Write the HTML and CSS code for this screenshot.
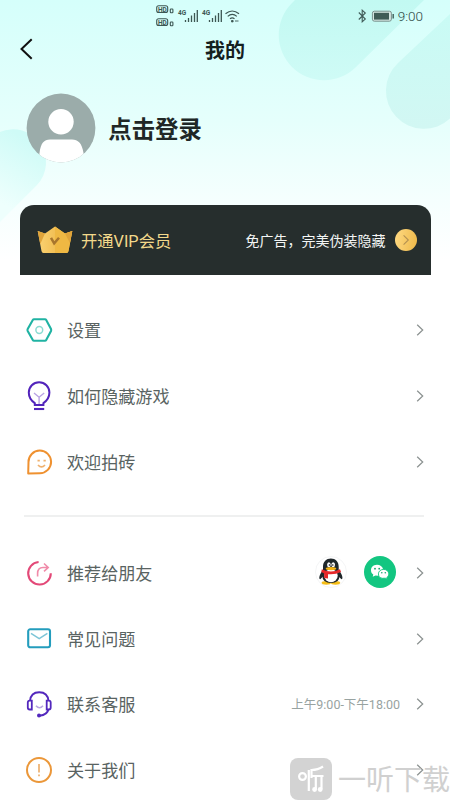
FILE: index.html
```html
<!DOCTYPE html>
<html lang="zh-CN">
<head>
<meta charset="utf-8">
<title>我的</title>
<link rel="stylesheet" href="styles.css">
</head>
<body>
<svg width="0" height="0" class="defs" aria-hidden="true">
  <symbol id="chev" viewBox="0 0 8 14"><path d="M1.2 1.7 6.7 7 1.2 12.3" fill="none" stroke="currentColor" stroke-width="1.25"/></symbol>
</svg>
<div class="screen">
  <svg class="decor" width="450" height="260" viewBox="0 0 450 260" aria-hidden="true">
    <defs>
      <linearGradient id="g1" x1="0" y1="0" x2="0" y2="1"><stop offset="0" stop-color="#c2f9f2"/><stop offset="1" stop-color="#cffbf6"/></linearGradient>
      <linearGradient id="g2" x1="0" y1="0" x2="0" y2="1"><stop offset="0" stop-color="#c9fbf5"/><stop offset="1" stop-color="#d2f7f3"/></linearGradient>
      <linearGradient id="g3" gradientUnits="userSpaceOnUse" x1="38" y1="145" x2="4" y2="205"><stop offset="0" stop-color="#cffbf7"/><stop offset="1" stop-color="#eefffd"/></linearGradient>
    </defs>
    <path d="M292 3 295 0H424L356 67A45 45 0 1 1 292 3Z" fill="url(#g1)"/>
    <path d="M398 63 450 14V118.6A38 38 0 0 1 398 63Z" fill="url(#g2)"/>
    <path d="M0 132A33 33 0 0 1 37 185L0 222Z" fill="url(#g3)"/>
  </svg>

  <div class="status">
    <svg class="signals" width="84" height="24" viewBox="0 0 84 24">
      <g fill="none" stroke="#3d5753" stroke-width="1.1"><rect x=".7" y="2.7" width="11" height="6.8" rx="2"/><rect x=".7" y="15.7" width="11" height="6.8" rx="2"/><rect x="14.3" y="6" width="2.6" height="3.8" rx=".7"/><rect x="14.3" y="19" width="2.6" height="3.8" rx=".7"/></g>
      <g fill="#3d5753" class="tiny"><text x="2" y="8.5">HD</text><text x="2" y="21.5">HD</text><text x="22" y="12">4G</text><text x="46" y="12">4G</text></g>
      <path d="M29.5 17v2M32.5 15V19M35.5 12.5V19M38.5 10V19M41.3 7V19M53.5 17v2M56.5 15V19M59.5 12.5V19M62.5 10V19M65.3 7V19" stroke="#3d5753" stroke-width="1.3"/>
      <path d="M69.5 10.8Q76.2 5.2 83 10.8M71.7 13.4Q76.2 9.4 80.8 13.4M74 15.8Q76.2 14 78.5 15.8" fill="none" stroke="#3d5753" stroke-width="1.2"/>
      <path d="M75.5 17.5h1.6v1.4h-1.6zM79 18h3.5" stroke="#3d5753" stroke-width=".9" fill="#3d5753"/>
    </svg>
    <div class="status-right">
      <svg width="37" height="14" viewBox="0 0 37 14"><path d="M1.8 3.5 8.3 10 5.2 12.8V1.2L8.3 4 1.8 10.5" fill="none" stroke="#405b58" stroke-width="1.1"/><rect x="15.4" y="2.2" width="19" height="10" rx="2" fill="#d5e6e2" stroke="#78918d" stroke-width="1"/><rect x="17" y="3.8" width="15" height="6.8" fill="#3f5c57"/><path d="M36.2 5v4.5" stroke="#3f5c57" stroke-width="1.4"/></svg>
      <span class="time">9:00</span>
    </div>
  </div>

  <header class="titlebar">
    <svg class="back" width="14" height="22" viewBox="0 0 14 22"><path d="M12.7 1.2 2.5 11 12.7 20.8" fill="none" stroke="#111" stroke-width="2"/></svg>
    <h1>我的</h1>
  </header>

  <div class="profile">
    <svg width="70" height="70" viewBox="0 0 70 70"><clipPath id="c"><circle cx="35" cy="35" r="34.4"/></clipPath><g clip-path="url(#c)"><path d="M0 0h70v70H0z" fill="#9bacaa"/><circle cx="35" cy="28.7" r="12.7" fill="#fff"/><path d="M12 70 13.5 60C14.8 50 18 46.5 24 46.5H46C52 46.5 56 50 57.5 60L59 70Z" fill="#fff"/></g></svg>
    <strong>点击登录</strong>
  </div>

  <div class="vip">
    <svg width="36" height="28" viewBox="0 0 36 28">
      <defs><linearGradient id="gold"><stop offset="0" stop-color="#fbd373"/><stop offset="1" stop-color="#e9ad39"/></linearGradient></defs>
      <path d="M.7 5 8 7.5 18 .5 28 7.5 35.3 5 31.5 25Q31.2 27 29.5 27H6.5Q4.8 27 4.5 25Z" fill="url(#gold)"/>
      <path d="M18 .5 28 7.5 35.3 5 31.5 25Q31.2 27 29.5 27H18Z" fill="#efb843"/><path d="M.7 5 8 7.5 3.3 18ZM28 7.5 35.3 5 32.9 17Z" fill="#e0a43a"/>
      <path d="M14 11.8 17.2 17.3 22 11.8" fill="none" stroke="#a8752c" stroke-width="2.5"/>
    </svg>
    <span class="vip-name">开通<span class="latin">VIP</span>会员</span>
    <span class="vip-note">免广告，完美伪装隐藏</span>
    <span class="coin"><svg width="8" height="12"><use href="#chev"/></svg></span>
  </div>

  <nav class="menu">
    <div class="row">
      <svg class="icon" viewBox="0 0 28 28" fill="none"><path d="M9 3.3H20Q20.8 3.3 21.2 4L26 13Q26.4 14 26 15L21.2 24Q20.8 24.8 20 24.8H9Q8.2 24.8 7.8 24L2.7 15Q2.2 14 2.7 13L7.8 4Q8.2 3.3 9 3.3Z" stroke="#20b3a3" stroke-width="2.1"/><circle cx="14.3" cy="14" r="3.4" stroke="#8bdcd2" stroke-width="1.5"/></svg>
      <span class="label">设置</span><svg class="chev"><use href="#chev"/></svg>
    </div>
    <div class="row">
      <svg class="icon bulb" viewBox="0 0 28 32" fill="none"><path d="M9.8 25V23.2C6.5 21 3.8 17.5 3.8 12.6A10.3 10.3 0 0 1 24.4 12.6C24.4 17.5 21.7 21 18.4 23.2V25Z" stroke="#5224bb" stroke-width="2"/><path d="M9 29H19.2" stroke="#5224bb" stroke-width="2.1"/><path d="M9 13 14.1 17.2 19.2 13M14.1 17.2V24" stroke="#b9a3e3" stroke-width="1.4"/></svg>
      <span class="label">如何隐藏游戏</span><svg class="chev"><use href="#chev"/></svg>
    </div>
    <div class="row">
      <svg class="icon" viewBox="0 0 28 28" fill="none"><path d="M3.2 25.5 3.5 14A11.3 11.3 0 1 1 14.8 25.2Z" stroke="#ef9130" stroke-width="2" stroke-linejoin="round"/><path d="M12.5 12.6h2.3M18.5 12.6h2.3M13 17Q16.5 20.8 20 17" stroke="#efb16f" stroke-width="1.7"/></svg>
      <span class="label">欢迎拍砖</span><svg class="chev"><use href="#chev"/></svg>
    </div>
    <hr>
    <div class="row">
      <svg class="icon" viewBox="0 0 28 28" fill="none"><path d="M13.6 3A11.3 11.3 0 1 0 25.8 14.2" stroke="#e34978" stroke-width="2.1"/><path d="M12.6 17.5V14.5Q12.6 8.5 18 8.5H22M19 4.5 23.2 8.5 19 12.4" stroke="#f08ba9" stroke-width="1.6"/></svg>
      <span class="label">推荐给朋友</span>
      <span class="share">
        <svg width="32" height="32" viewBox="0 0 32 32"><circle cx="16" cy="16" r="15.5" fill="#fff" stroke="#f4f5f6"/>
          <ellipse cx="11.3" cy="26.8" rx="4.7" ry="1.9" fill="#f5bd16"/><ellipse cx="20.5" cy="26.8" rx="4.7" ry="1.9" fill="#f5bd16"/>
          <path d="M8 14C4 19 3.5 23 5.3 23.3L8 20.5ZM23.7 14C27.7 19 28.3 23 26.5 23.3L23.5 20.5Z" fill="#20272b"/>
          <path d="M8 14V11C8 5.5 11.3 2.5 15.9 2.5S23.7 5.5 23.7 11V14L24.5 20Q24.5 27 16 27T7.3 20Z" fill="#20272b"/>
          <ellipse cx="16" cy="19.7" rx="6.7" ry="6.5" fill="#fff"/><ellipse cx="13.9" cy="8.8" rx="1.8" ry="2.5" fill="#fff"/><ellipse cx="18.2" cy="8.8" rx="1.8" ry="2.5" fill="#fff"/><circle cx="14.4" cy="9" r=".8" fill="#111"/><circle cx="17.8" cy="9" r=".8" fill="#111"/>
          <ellipse cx="16" cy="12.6" rx="5.3" ry="1.6" fill="#f7b616"/><path d="M6.8 13.2Q16 18 25 13.2L26 16Q20 19 13 18.2V22.5L9.2 22V17.5L6.3 16Z" fill="#e5282a"/>
        </svg>
        <svg width="32" height="32" viewBox="0 0 32 32"><circle cx="16" cy="16" r="16" fill="#13c681"/><path d="M13 8.7C8.9 8.7 7 11.5 7 14.2 7 16.3 8 17.7 9.3 18.5L8.7 20.8 11.5 19.5 14 19.8 17 19.2 19 13C18.5 10.5 16 8.7 13 8.7Z" fill="#fff"/><path d="M19.6 13.4C22.5 13.4 24.8 15.3 24.8 17.9 24.8 19.4 24 20.7 22.8 21.5L23.2 23.2 21.3 22.2Q14.4 23.2 14.4 17.9C14.4 15.3 16.7 13.4 19.6 13.4Z" fill="#fff" stroke="#13c681" stroke-width=".9"/><g fill="#13a66e"><circle cx="11" cy="12.7" r=".9"/><circle cx="15.2" cy="12.7" r=".9"/><circle cx="17.8" cy="16.7" r=".8"/><circle cx="21.3" cy="16.7" r=".8"/></g></svg>
      </span>
      <svg class="chev"><use href="#chev"/></svg>
    </div>
    <div class="row">
      <svg class="icon" viewBox="0 0 28 28" fill="none"><rect x="3.2" y="4.3" width="21.8" height="18" rx="2" stroke="#249dbd" stroke-width="2.1"/><path d="M6 8.3 14.2 13.7 22.4 8.3" stroke="#7cc5d7" stroke-width="1.5"/></svg>
      <span class="label">常见问题</span><svg class="chev"><use href="#chev"/></svg>
    </div>
    <div class="row">
      <svg class="icon" viewBox="0 0 28 28" fill="none"><path d="M5 11C5.5 5 9.3 2.2 14.2 2.2S23 5 23.5 11M23.5 19Q22.5 25 14.5 25.7" stroke="#5328bd" stroke-width="1.9"/><path d="M6.8 10.6V19.5H4.7Q2.8 19.5 2.8 17.5V12.6Q2.8 10.6 4.7 10.6ZM21.7 10.6H23.8Q25.7 10.6 25.7 12.6V17.5Q25.7 19.5 23.8 19.5H21.7Z" stroke="#5328bd" stroke-width="1.8"/><circle cx="14" cy="25.4" r="2" fill="#5328bd"/><path d="M11 15.7Q14.5 19.7 18 15.7" stroke="#b8a5e2" stroke-width="1.6"/></svg>
      <span class="label">联系客服</span><span class="hours">上午9:00-下午18:00</span><svg class="chev"><use href="#chev"/></svg>
    </div>
    <div class="row">
      <svg class="icon" viewBox="0 0 28 28" fill="none"><circle cx="14" cy="14" r="12" stroke="#eb9739" stroke-width="2"/><path d="M14 8v8.5M14 18.5v1.8" stroke="#edb06e" stroke-width="1.7"/></svg>
      <span class="label">关于我们</span><svg class="chev"><use href="#chev"/></svg>
    </div>
  </nav>

  <div class="mark">
    <svg width="42" height="42" viewBox="0 0 42 42"><rect width="42" height="42" rx="8" fill="#cfcfcf"/><g fill="none" stroke="#fff" stroke-width="2.2"><circle cx="12.5" cy="18.5" r="3.4"/><path d="M18.8 12V33M33 8.5Q28 12 21.5 12M21.5 11V20M21.5 18H33.5M25.8 18V31M31.5 18V31"/></g><circle cx="24.6" cy="31.5" r="2.4" fill="#fff"/><circle cx="30.2" cy="31.5" r="2.4" fill="#fff"/></svg>
    <span>一听下载</span>
  </div>
</div>
</body>
</html>
```
FILE: styles.css
```css
* { box-sizing: border-box; }
body {
  margin: 0;
  font-family: "Noto Sans CJK SC", sans-serif;
  background: #fff;
}
.defs { position: absolute; }
.screen {
  position: relative;
  width: 450px;
  height: 800px;
  overflow: hidden;
  background: linear-gradient(#d5fffb 0, #e5fffc 120px, #f5fffe 200px, #fff 260px);
}
.decor { position: absolute; top: 0; left: 0; }
.status, .titlebar, .profile, .vip, .menu { position: relative; }
.status {
  display: flex;
  justify-content: space-between;
  height: 32px;
  padding: 3px 27px 0 156px;
}
.tiny { font: bold 6.5px Roboto, sans-serif; }
.status-right {
  display: flex;
  align-items: center;
  gap: 4px;
  height: 26px;
}
.time {
  font: 300 13.5px/28px Roboto, sans-serif;
  color: #2d4743;
}
.titlebar {
  display: flex;
  align-items: center;
  justify-content: center;
  height: 36px;
}
.back { position: absolute; left: 19px; top: 6px; }
h1 {
  margin: 0;
  font-size: 20px;
  line-height: 36px;
  font-weight: 700;
  color: #14201f;
}
.profile {
  display: flex;
  align-items: center;
  gap: 12px;
  height: 70px;
  margin: 25px 0 0 26.3px;
}
.profile strong { font-size: 23.4px; line-height: 34px; color: #202726; }
.vip {
  display: flex;
  align-items: center;
  height: 70px;
  margin: 42px 19.5px 0;
  padding: 0 14px 0 17px;
  border-radius: 14px 14px 0 0;
  background: #262e2d;
}
.vip-name { margin-left: 8.5px; font-size: 16.3px; color: #f3d98b; }
.latin { font-family: Roboto, sans-serif; }
.vip-note { margin-left: auto; font-size: 14px; color: #f4f6f5; }
.coin {
  display: flex;
  align-items: center;
  justify-content: center;
  width: 22px;
  height: 22px;
  margin-left: 9px;
  border-radius: 50%;
  background: linear-gradient(100deg, #ffda83, #edb848);
  color: #b39152;
}
.menu { padding: 22.3px 25px 0; }
.row { display: flex; align-items: center; height: 65.8px; }
.icon { width: 28px; height: 28px; flex: none; }
.bulb { height: 32px; }
.label { margin: -1px 0 0 14px; font-size: 17.1px; color: #596362; }
.chev { width: 8px; height: 14px; margin-left: auto; margin-right: 1px; color: #8c9291; }
hr {
  height: 2px;
  margin: 20.7px 1px 22.5px -1px;
  border: 0;
  background: #eff0f0;
}
.share { display: flex; gap: 17px; margin-left: auto; margin-top: -1px; }
.hours {
  margin: -2px 0 0 auto;
  font: 12.5px Roboto, "Noto Sans CJK SC", sans-serif;
  color: #98a3a1;
}
.hours + .chev { margin-left: 16px; }
.share + .chev { margin-left: 20px; }
.mark {
  position: absolute;
  left: 290px;
  top: 758px;
  display: flex;
  align-items: center;
  gap: 6px;
  opacity: .9;
}
.mark span {
  margin-top: -3px;
  font-size: 28px;
  line-height: 42px;
  white-space: nowrap;
  color: #cbcbcb;
}
```
